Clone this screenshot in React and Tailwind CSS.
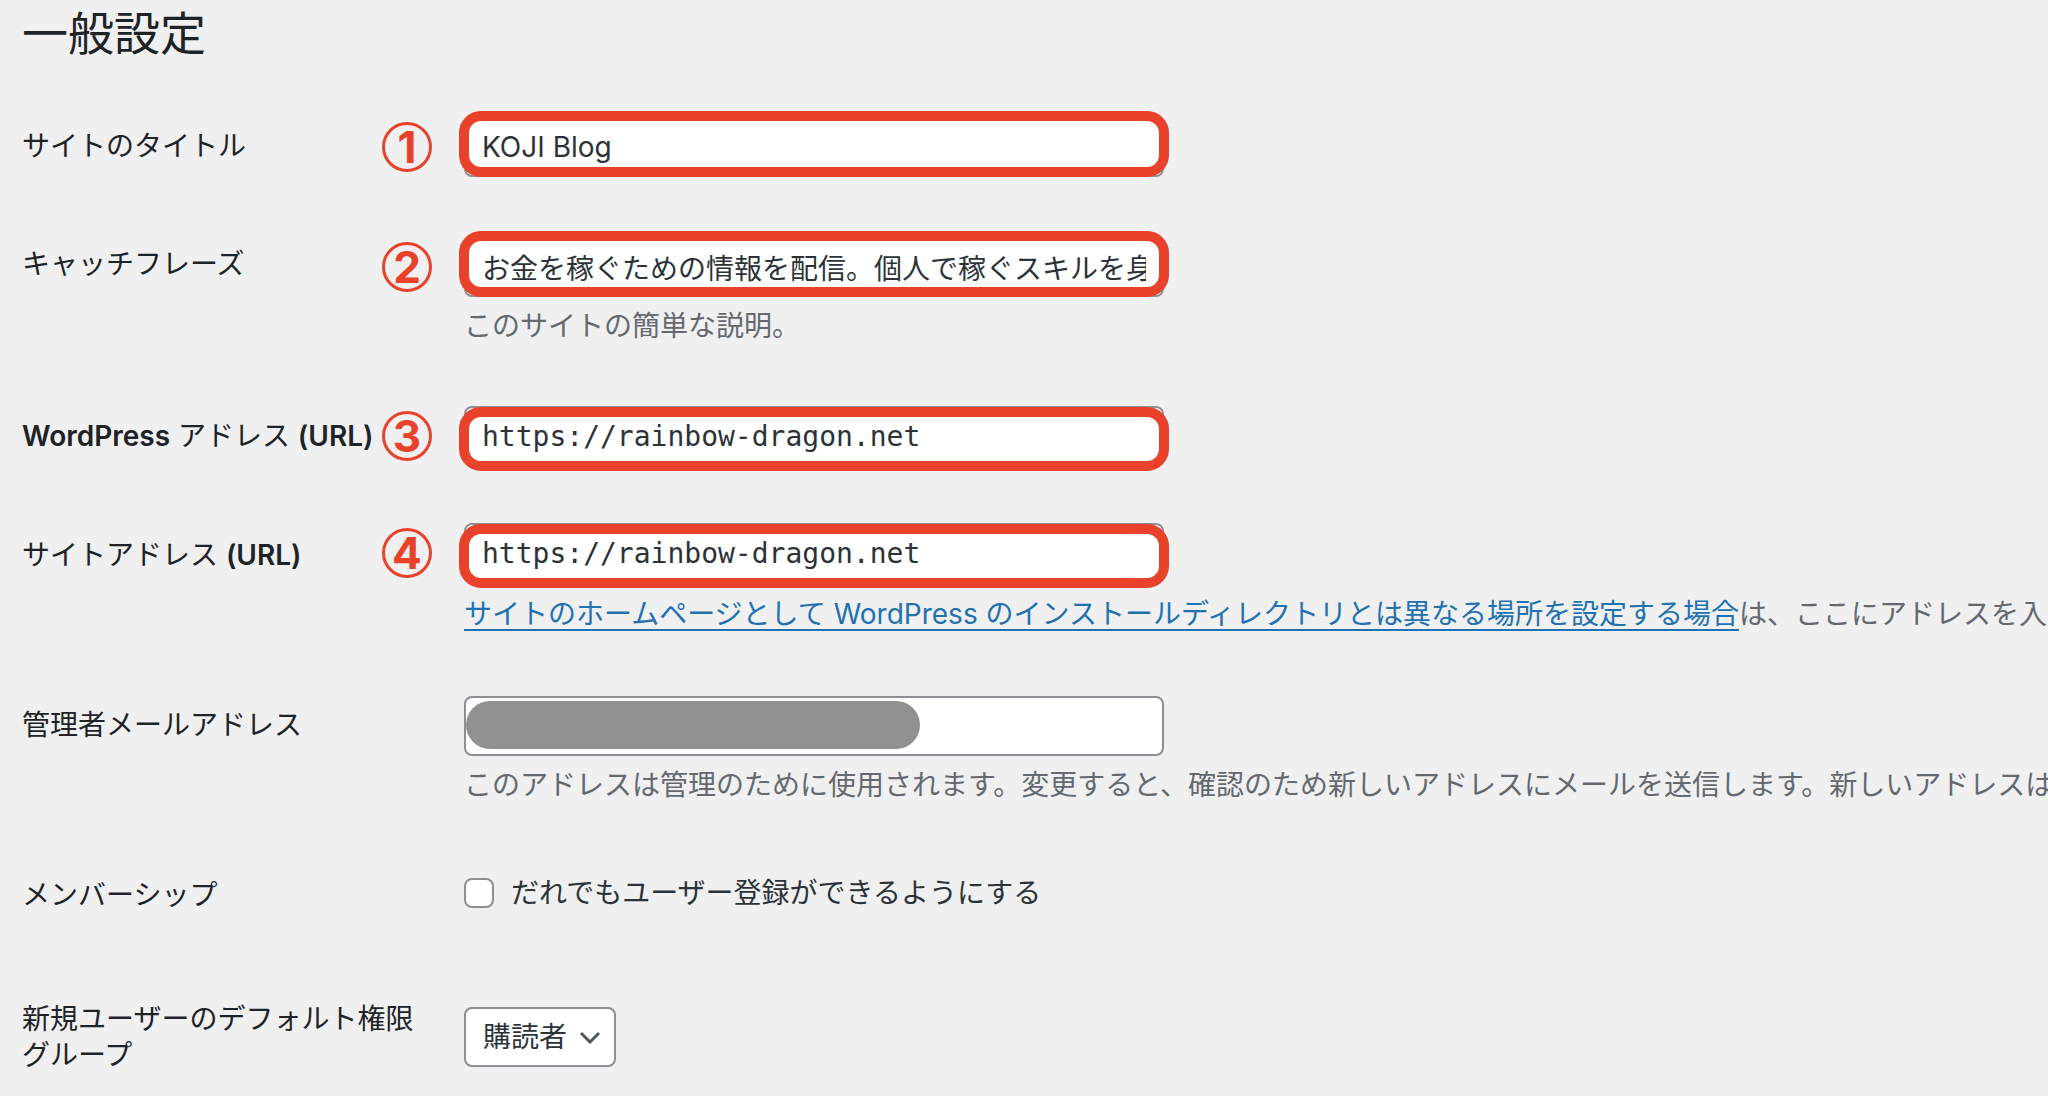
import React from 'react';

const RED = 'border-[#e8432a]';

// numbered marker drawn to the left of a highlighted field
const Marker = ({ n }) => (
  <div className="absolute left-[-82px] top-1/2 -translate-y-1/2 flex h-[50px] w-[50px] items-center justify-center rounded-full border-[3px] border-[#e8432a] bg-transparent text-[44px] font-bold leading-none text-[#e8432a]">
    <span className="-mt-[1px]">{n}</span>
  </div>
);

const TextInput = ({ value, mono }) => (
  <input
    readOnly
    value={value}
    className={
      mono
        ? "block h-[60px] w-[700px] rounded-[8px] border-2 border-[#8c8f94] bg-white px-[16px] font-['DejaVu_Sans_Mono',monospace] text-[28px] text-[#2c3338] outline-none"
        : "block h-[60px] w-[700px] rounded-[8px] border-2 border-[#8c8f94] bg-white px-[16px] font-['Inter','Noto_Sans_CJK_JP',sans-serif] text-[28px] text-[#2c3338] outline-none"
    }
  />
);

export default function App() {
  return (
    <div className="h-[1096px] w-full overflow-hidden bg-[#f0f0f1] pl-[22px] font-['Inter','Noto_Sans_CJK_JP',sans-serif] text-[#1d2327]">
      <h1 className="pt-[3px] text-[46px] font-normal leading-[60px]">一般設定</h1>

      {/* site title */}
      <div className="mt-[24px] flex">
        <div className="w-[442px] shrink-0 pt-[41px] text-[28px] leading-[36px]">サイトのタイトル</div>
        <div className="pt-[30px] pb-[30px]">
          <div className="relative w-[700px]">
            <TextInput value="KOJI Blog" />
            <div className={`pointer-events-none absolute -left-[5px] -right-[5px] -top-[6px] bottom-0 rounded-[22px] border-[10px] ${RED}`} />
            <Marker n="1" />
          </div>
        </div>
      </div>

      {/* tagline */}
      <div className="flex">
        <div className="w-[442px] shrink-0 pt-[39px] text-[28px] leading-[36px]">キャッチフレーズ</div>
        <div className="pt-[30px] pb-[30px]">
          <div className="relative w-[700px]">
            <TextInput value="お金を稼ぐための情報を配信。個人で稼ぐスキルを身につけよう。" />
            <div className={`pointer-events-none absolute -left-[5px] -right-[5px] -top-[6px] bottom-0 rounded-[22px] border-[10px] ${RED}`} />
            <Marker n="2" />
          </div>
          <p className="mt-[9px] whitespace-nowrap text-[28px] leading-[40px] text-[#646970]">このサイトの簡単な説明。</p>
        </div>
      </div>

      {/* WordPress address */}
      <div className="flex">
        <div className="w-[442px] shrink-0 pt-[42px] text-[28px] leading-[36px]">
          <span className="font-semibold">WordPress</span> アドレス <span className="font-semibold">(URL)</span>
        </div>
        <div className="pt-[30px] pb-[27px]">
          <div className="relative w-[700px]">
            <TextInput value="https://rainbow-dragon.net" mono />
            <div className={`pointer-events-none absolute -left-[5px] -right-[5px] top-[1px] -bottom-[5px] rounded-[22px] border-[10px] ${RED}`} />
            <Marker n="3" />
          </div>
        </div>
      </div>

      {/* site address */}
      <div className="flex">
        <div className="w-[442px] shrink-0 pt-[44px] text-[28px] leading-[36px]">
          サイトアドレス <span className="font-semibold">(URL)</span>
        </div>
        <div className="pt-[30px] pb-[32px]">
          <div className="relative w-[700px]">
            <TextInput value="https://rainbow-dragon.net" mono />
            <div className={`pointer-events-none absolute -left-[5px] -right-[5px] top-[1px] -bottom-[5px] rounded-[22px] border-[10px] ${RED}`} />
            <Marker n="4" />
          </div>
          <p className="mt-[11px] whitespace-nowrap text-[28px] leading-[40px] text-[#646970]">
            <a href="#" className="text-[#2271b1] underline decoration-2 underline-offset-[5px]">
              サイトのホームページとして WordPress のインストールディレクトリとは異なる場所を設定する場合
            </a>
            は、ここにアドレスを入力してください。
          </p>
        </div>
      </div>

      {/* admin email */}
      <div className="flex">
        <div className="w-[442px] shrink-0 pt-[41px] text-[28px] leading-[36px]">管理者メールアドレス</div>
        <div className="pt-[30px] pb-[30px]">
          <div className="relative w-[700px]">
            <TextInput value="" />
            <div className="absolute left-[2px] top-[5px] h-[48px] w-[454px] rounded-full bg-[#919191]" />
          </div>
          <p className="mt-[9px] whitespace-nowrap text-[28px] leading-[40px] text-[#646970]">
            このアドレスは管理のために使用されます。変更すると、確認のため新しいアドレスにメールを送信します。新しいアドレスは確認されるまで有効になりません。
          </p>
        </div>
      </div>

      {/* membership */}
      <div className="flex">
        <div className="w-[442px] shrink-0 pt-[42px] text-[28px] leading-[36px]">メンバーシップ</div>
        <div className="pt-[40px] pb-[40px]">
          <label className="flex items-center gap-[17px] text-[28px] leading-[36px] text-[#2c3338]">
            <input type="checkbox" className="h-[30px] w-[30px] appearance-none rounded-[8px] border-2 border-[#8c8f94] bg-white" />
            だれでもユーザー登録ができるようにする
          </label>
        </div>
      </div>

      {/* default role */}
      <div className="flex">
        <div className="w-[442px] shrink-0 pr-[42px] pt-[50px] text-[28px] leading-[36px]">新規ユーザーのデフォルト権限グループ</div>
        <div className="pt-[56px]">
          <div className="flex h-[60px] w-[152px] items-center rounded-[8px] border-2 border-[#8c8f94] bg-white pl-[17px] text-[28px] text-[#2c3338]">
            購読者
            <svg className="ml-[12px]" width="22" height="13" viewBox="0 0 22 13" fill="none">
              <path d="M2 2 L11 11 L20 2" stroke="#50575e" strokeWidth="3" />
            </svg>
          </div>
        </div>
      </div>
    </div>
  );
}
